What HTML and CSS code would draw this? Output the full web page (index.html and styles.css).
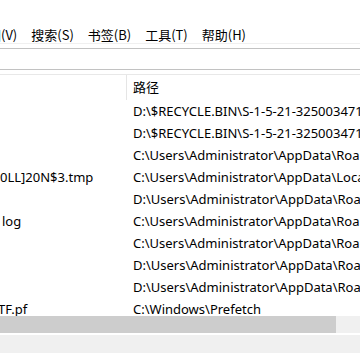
FILE: index.html
```html
<!DOCTYPE html>
<html lang="zh-CN">
<head>
    <meta charset="UTF-8">
    <meta name="viewport" content="width=device-width, initial-scale=1.0">
    <title>Everything</title>
    <link rel="stylesheet" href="styles.css">
</head>
<body>
    <div class="app">
        <div class="titlebar"></div>
        <nav class="menubar">
            <span class="menu">视图(V)</span>
            <span class="menu">搜索(S)</span>
            <span class="menu">书签(B)</span>
            <span class="menu">工具(T)</span>
            <span class="menu">帮助(H)</span>
        </nav>
        <div class="searchbar">
            <div class="search"></div>
        </div>
        <div class="list">
            <div class="header">
                <div class="col name"></div>
                <div class="col path">路径</div>
            </div>
            <div class="row"><div class="cell name"></div><div class="cell path">D:\$RECYCLE.BIN\S-1-5-21-3250034712-1173</div></div>
            <div class="row"><div class="cell name"></div><div class="cell path">D:\$RECYCLE.BIN\S-1-5-21-3250034712-1173</div></div>
            <div class="row"><div class="cell name"></div><div class="cell path">C:\Users\Administrator\AppData\Roaming</div></div>
            <div class="row"><div class="cell name">0LL]20N$3.tmp</div><div class="cell path">C:\Users\Administrator\AppData\Local\Temp</div></div>
            <div class="row"><div class="cell name"></div><div class="cell path">D:\Users\Administrator\AppData\Roaming</div></div>
            <div class="row"><div class="cell name nudge">log</div><div class="cell path">C:\Users\Administrator\AppData\Roaming</div></div>
            <div class="row"><div class="cell name"></div><div class="cell path">C:\Users\Administrator\AppData\Roaming</div></div>
            <div class="row"><div class="cell name"></div><div class="cell path">D:\Users\Administrator\AppData\Roaming</div></div>
            <div class="row"><div class="cell name"></div><div class="cell path">D:\Users\Administrator\AppData\Roaming</div></div>
            <div class="row"><div class="cell name clip">TF.pf</div><div class="cell path">C:\Windows\Prefetch</div></div>
        </div>
        <div class="hscroll"><div class="thumb"></div></div>
        <div class="statusbar"></div>
        <div class="bottom"></div>
    </div>
</body>
</html>
```

FILE: styles.css
```css
body {
    margin: 0;
    background-color: white;
    font-family: "Noto Sans", "Noto Sans CJK SC", sans-serif;
    font-size: 13px;
    color: #000;
    overflow: hidden;
}
.app {
    display: flex;
    flex-direction: column;
    height: 100vh;
}
.titlebar {
    height: 26px;
}
.menubar {
    display: flex;
    height: 17px;
    line-height: 18px;
    margin-left: -32px;
    border-bottom: 1px solid #f0f0f0;
    white-space: nowrap;
}
.menu {
    padding: 0 7px;
    font-family: "Noto Sans CJK SC", sans-serif;
}
.searchbar {
    padding: 4px 0;
}
.search {
    height: 22px;
    box-sizing: border-box;
    border-top: 1px solid #c2c2c2;
    border-bottom: 1px solid #c2c2c2;
    background-color: white;
}
.list {
    flex: 1;
    overflow: hidden;
    border-top: 1px solid #e8e8e8;
}
.header {
    display: grid;
    grid-template-columns: 127px 1fr;
    height: 25px;
    line-height: 24px;
}
.header .name {
    border-right: 1px solid #e5e5e5;
}
.header .path {
    padding-left: 6px;
    font-family: "Noto Sans CJK SC", sans-serif;
}
.row {
    display: grid;
    grid-template-columns: 127px 1fr;
    height: 22px;
    line-height: 22px;
}
.cell {
    white-space: nowrap;
    overflow: hidden;
}
.path {
    padding-left: 6px;
}
.nudge {
    padding-left: 2px;
}
.clip {
    text-indent: -2px;
}
.hscroll {
    height: 17px;
    background-color: #f0f0f0;
}
.thumb {
    width: 336px;
    height: 100%;
    background-color: #cdcdcd;
}
.statusbar {
    height: 18px;
    margin-top: 2px;
    background-color: #f0f0f0;
}
.bottom {
    height: 7px;
}
```
